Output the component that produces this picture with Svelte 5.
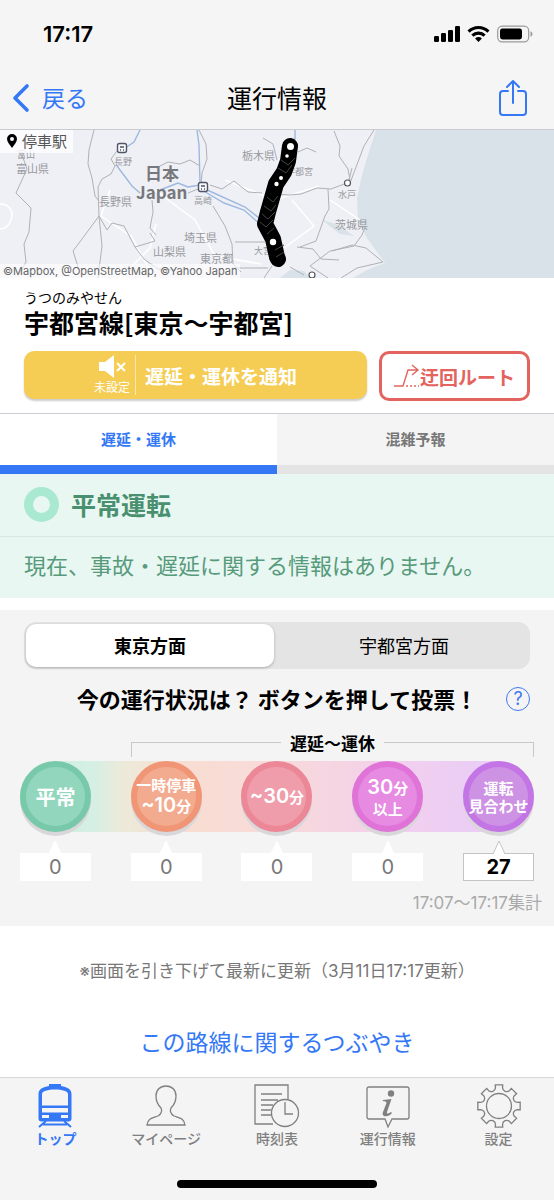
<script>
  let tab = $state('delay');
  let direction = $state('tokyo');

  const levels = [
    { id: 'normal', rows: [['平常', 'lg']], count: 0 },
    { id: 'stop', rows: [['一時停車', 'sm'], ['~10', 'num', '分']], count: 0 },
    { id: 'under30', rows: [['~30', 'num', '分']], count: 0 },
    { id: 'over30', rows: [['30', 'num', '分'], ['以上', 'sm']], count: 0 },
    { id: 'suspend', rows: [['運転', 'sm'], ['見合わせ', 'sm']], count: 27 },
  ];

  const nav = [
    { id: 'top', label: 'トップ' },
    { id: 'mypage', label: 'マイページ' },
    { id: 'timetable', label: '時刻表' },
    { id: 'info', label: '運行情報' },
    { id: 'settings', label: '設定' },
  ];

  function polar(r, deg) {
    const t = (deg * Math.PI) / 180;
    return `${(23 + r * Math.cos(t)).toFixed(2)} ${(23 + r * Math.sin(t)).toFixed(2)}`;
  }

  // eight teeth with a scallop between each pair
  let gear = '';
  for (let i = 0; i < 8; i++) {
    const a = i * 45;
    gear += `${i ? 'L' : 'M'}${polar(18.5, a - 11)}L${polar(21.5, a - 10)}L${polar(21.5, a + 10)}L${polar(18.5, a + 11)}`;
    gear += `A4.2 4.2 0 0 0 ${polar(18.5, a + 34)}`;
  }
  gear += 'Z';
</script>

<div class="app">
  <header>
    <div class="status">
      <span class="time">17:17</span>
      <svg width="100" height="20" viewBox="0 0 100 20" aria-hidden="true">
        <rect x="0" y="12" width="5" height="6" rx="1.3" />
        <rect x="7" y="9" width="5" height="9" rx="1.3" />
        <rect x="14" y="6" width="5" height="12" rx="1.3" />
        <rect x="21" y="2" width="5" height="16" rx="1.3" />
        <g fill="none" stroke="#000" stroke-width="3.2">
          <path d="M34.600 7.600a14 14 0 0 1 19.800 0" />
          <path d="M38.400 11.600a8.600 8.600 0 0 1 12.200 0" />
        </g>
        <path d="M44.500 18l-3.400-3.600a4.800 4.800 0 0 1 6.800 0z" />
        <rect x="63.700" y="2.200" width="31" height="15.600" rx="4.600" fill="none" stroke="#999" stroke-width="1.2" />
        <rect x="66" y="4.500" width="22" height="11" rx="2.400" />
        <path d="M96.500 7.200c2.600 1.200 2.600 4.400 0 5.600z" fill="#999" />
      </svg>
    </div>
    <div class="bar">
      <button class="back">
        <svg width="18" height="30" viewBox="0 0 18 30" fill="none" stroke="currentColor" stroke-width="3.6" stroke-linecap="round" stroke-linejoin="round" aria-hidden="true">
          <path d="M15 3L3 15l12 12" />
        </svg>
        <span>戻る</span>
      </button>
      <h1>運行情報</h1>
      <button class="share" aria-label="共有">
        <svg width="30" height="38" viewBox="0 0 30 38" fill="none" stroke="currentColor" stroke-width="2" stroke-linecap="round" stroke-linejoin="round" aria-hidden="true">
          <path d="M10 12H5a3 3 0 0 0-3 3v18a3 3 0 0 0 3 3h20a3 3 0 0 0 3-3V15a3 3 0 0 0-3-3h-5M15 24V2M9 8l6-6 6 6" />
        </svg>
      </button>
    </div>
  </header>

  <div class="map">
    <svg viewBox="0 0 554 148" preserveAspectRatio="xMidYMid slice" role="img" aria-label="路線図">
      <rect width="554" height="148" fill="#eff0f5" />
      <path d="M376 0l-9 28-5 17-5 23 1 23 9 17 18 25-18 7-14 8H554V0z" fill="#d9e1e9" />
      <path d="M280 148l10-8 14 1 6 7zM322 90l14 4 18 12-14-2z" fill="#d9e1e9" />
      <g fill="none" stroke="#fff" stroke-width="1.5">
        <path d="M0 74c10 0 14 8 11 16-2 6-6 9-11 9M110 60l-9 26 30 20 22 40M155 60l40 30 20 36 46 8M225 50l50 20 44-14M292 70l22 26-30 22M330 70l30 20M120 148l30-30 6-24" />
      </g>
      <g fill="none" stroke="#afb1b7" stroke-width="1">
        <path d="M22 25l5 14-11 24 15 15-2 24-5 12 2 18-8 14" />
        <path d="M94 0l-5 20-1 14 4 14 3 18 4 5M99 86l-1-29 4-8 9-5 4-8-4-7 6-8M99 86l-14 19-12 16 6 19" />
        <path d="M99 86l8 14 5-7 12 3 11 21 20-6-5-8M99 86l3 30-4 32M135 117l9 12 14 10 18 1M152 70l1 12-3 16 6 7" />
        <path d="M156 38l12-6 12 2 10-4 10 6M199 0l7 14 1 15-5 14-1 12M203 57l-15 6" />
        <path d="M210 55l12 4 12-8 14 11 14 1M275 64l14 1 12-1 16-6 14 1 16-6M213 76l12 20 7 18 1 20 8 8" />
        <path d="M235 112l30 0M300 117l16-6 9-25 4-7-1-20M232 138l36 0M290 137l14 8M297 117l16 2 8 10 18 1" />
        <path d="M328 148l-18-12 20-15 24-5 8-11 3-8M352 38l-3 12M350 50l-2-11-9-13 1-10-6-15M350 53l14-37 10-16" />
        <path d="M341 148l16-10 26-6-17-14-14-3-20 6M263 8l10 6 4 16M298 22l9-4 9 4M264 148l8-12" />
      </g>
      <g fill="none" stroke="#9db8df" stroke-width="1.4">
        <path d="M140 0l-6 12-12 8M117 36l15 20 8 7M160 60l18-7 10 4 12-2M197 0l2 15 1 38M202 60l22 13 20 7 18 16M205 59l40 18 18 14M295 0v10" />
      </g>
      <g fill="#fff" stroke="#55565b" stroke-width="1.2">
        <circle cx="347.500" cy="53" r="3" />
        <circle cx="312" cy="145" r="3" />
      </g>
      {#each [[122, 18], [203, 57]] as [x, y]}
        <g transform="translate({x} {y})" stroke="#4f5566" stroke-width="1.4">
          <rect x="-4.500" y="-4.500" width="9" height="9" rx="2" fill="#f7f7fa" />
          <path d="M-2 -1h4M-2 2h1M1 2h1" />
        </g>
      {/each}
      <g class="places" font-size="11">
        <text x="17" y="28" font-size="9">富山</text>
        <text x="16" y="43">富山県</text>
        <text x="114" y="35" font-size="9">長野</text>
        <text x="99" y="76">長野県</text>
        <text x="194" y="74" font-size="9">高崎</text>
        <text x="184" y="112">埼玉県</text>
        <text x="153" y="126">山梨県</text>
        <text x="200" y="133">東京都</text>
        <text x="242" y="30">栃木県</text>
        <text x="286" y="45" font-size="9">宇都宮</text>
        <text x="338" y="68" font-size="9">水戸</text>
        <text x="335" y="99">茨城県</text>
        <text x="254" y="124" font-size="9">大宮</text>
      </g>
      <g class="country">
        <text x="145" y="50">日本</text>
        <text x="136" y="69">Japan</text>
      </g>
      <path d="M290 16l-2 15-4 11-8 12-4 14-4 14-3 12 8 15 4 18 1 2" fill="none" stroke="#000" stroke-width="16" stroke-linecap="round" stroke-linejoin="round" />
      <path d="M281 30l7 5 7-7M278 38l8 5 6-8M267 67l6 5 5-6M264 76l7 5 5-6M262 84l6 5 7-7M260 92l6 5 7-7M267 104l7-6M275 120l9-5M276 127l8-5" fill="none" stroke="#444" stroke-width="1" />
      <g fill="#fff">
        <circle cx="290.500" cy="16.500" r="3.500" />
        <circle cx="287" cy="26" r="1.800" />
        <circle cx="281" cy="48" r="2" />
        <circle cx="276.500" cy="54" r="2.200" />
        <circle cx="273" cy="112" r="3.200" />
      </g>
    </svg>
    <span class="stops">
      <svg width="10" height="14" viewBox="0 0 10 14" aria-hidden="true">
        <path d="M5 0a5 5 0 0 1 5 5c0 3-3 6-5 9C3 11 0 8 0 5a5 5 0 0 1 5-5zm0 3a2 2 0 1 0 0 4 2 2 0 0 0 0-4z" fill-rule="evenodd" />
      </svg>
      停車駅
    </span>
    <span class="credit">©Mapbox, @OpenStreetMap, ©Yahoo Japan</span>
  </div>

  <main>
    <section class="line">
      <p class="kana">うつのみやせん</p>
      <h2>宇都宮線[東京〜宇都宮]</h2>
      <div class="actions">
        <button class="notify">
          <span class="mute">
            <svg width="28" height="24" viewBox="0 0 28 24" aria-hidden="true">
              <path d="M1 7h6l9-7v23l-9-7H1z" fill="#fff" />
              <path d="M19 8l8 8M27 8l-8 8" stroke="#fff" stroke-width="2" />
            </svg>
            未設定
          </span>
          <span class="notify-text">遅延・運休を通知</span>
        </button>
        <button class="detour">
          <svg width="26" height="24" viewBox="0 0 26 24" fill="none" stroke="currentColor" stroke-width="1.4" aria-hidden="true">
            <path d="M0 22h9l5-16h10M18 1l6 5-6 5" />
            <path d="M12 22h13" stroke-dasharray="2 2" />
          </svg>
          迂回ルート
        </button>
      </div>
    </section>

    <div class="tabs">
      <button class:active={tab === 'delay'} onclick={() => (tab = 'delay')}>遅延・運休</button>
      <button class:active={tab === 'crowd'} onclick={() => (tab = 'crowd')}>混雑予報</button>
    </div>

    <section class="service">
      <h3><i class="ring"></i>平常運転</h3>
      <p>現在、事故・遅延に関する情報はありません。</p>
    </section>

    <section class="vote">
      <div class="segment">
        <button class:active={direction === 'tokyo'} onclick={() => (direction = 'tokyo')}>東京方面</button>
        <button class:active={direction === 'utsunomiya'} onclick={() => (direction = 'utsunomiya')}>宇都宮方面</button>
      </div>

      <div class="question">
        <h3>今の運行状況は？ ボタンを押して投票！</h3>
        <button class="help" aria-label="ヘルプ">?</button>
      </div>

      <div class="range"><span>遅延〜運休</span></div>

      <div class="levels">
        {#each levels as level}
          <button class="level {level.id}">
            {#each level.rows as [text, size, unit]}
              <span class={size}>{text}{#if unit}<small>{unit}</small>{/if}</span>
            {/each}
          </button>
        {/each}
      </div>

      <div class="counts">
        {#each levels as level}
          <div class="count" class:voted={level.count > 0}>
            <svg width="14" height="14" viewBox="0 0 14 14" aria-hidden="true">
              <path d="M1 14L7 1l6 13" />
            </svg>
            {level.count}
          </div>
        {/each}
      </div>
      <p class="period">17:07〜17:17集計</p>
    </section>

    <p class="updated">※画面を引き下げて最新に更新（3月11日17:17更新）</p>
    <a class="tweets" href="#tweets">この路線に関するつぶやき</a>
  </main>

  <nav>
    {#each nav as item}
      <a href="#{item.id}" class:current={item.id === 'top'}>
        <svg width="46" height="46" viewBox="0 0 46 46" fill="none" stroke="currentColor" stroke-width="1.3" aria-hidden="true">
          {#if item.id === 'top'}
            <path d="M17 1h12v2c6 1 10.500 3 10.500 8v24.500q0 3-3 3h-27q-3 0-3-3V11c0-5 4.500-7 10.500-8z" fill="currentColor" stroke="none" />
            <path d="M10 11c0-3 6-4.500 13-4.500S36 8 36 11v11.500H10zM10 25h26v4.500H10z" fill="#f4f4f4" stroke="none" />
            <path d="M10 32h7v3h-7zM29 32h7v3h-7z" fill="#f4f4f4" stroke="none" />
            <path d="M14 38l-7 6M32 38l7 6M11 41.500h24" stroke-width="2" />
          {:else if item.id === 'mypage'}
            <path d="M23 3c-6 0-10 4-10 10 0 5 2 9 5 12 2 4 0 6-3 8-6 2-10 2-11 9h38c-1-7-5-7-11-9-3-2-5-4-3-8 3-3 5-7 5-12 0-6-4-10-10-10z" />
          {:else if item.id === 'timetable'}
            <path d="M19 41H1V2h33v14M7 11h21M7 17h17M7 22h12M7 27h10M7 32h10" />
            <circle cx="31" cy="30" r="13.500" />
            <path d="M31 19v12h8" />
          {:else if item.id === 'info'}
            <path d="M4 4h38q2 0 2 2v28q0 2-2 2H27l-4 8-3-8H4q-2 0-2-2V6q0-2 2-2z" />
            <circle cx="26" cy="10.500" r="3.200" fill="currentColor" stroke="none" />
            <path d="M18 17l8.500-1-4.500 13q-1 3 4 0l1 1c-4 5-11 4-9-1l3.500-9q0-2-4-2z" fill="currentColor" stroke="none" />
          {:else}
            <path d={gear} />
            <circle cx="23" cy="23" r="12.500" />
          {/if}
        </svg>
        {item.label}
      </a>
    {/each}
  </nav>
  <div class="home"></div>
</div>

<style>
  :global(body) {
    margin: 0;
    background: #fff;
    font-family: 'Noto Sans CJK JP', sans-serif;
    color: #000;
  }

  * {
    box-sizing: border-box;
  }

  h1, h2, h3, p {
    margin: 0;
  }

  button {
    font: inherit;
    color: inherit;
    border: 0;
    padding: 0;
    background: none;
    cursor: pointer;
  }

  a {
    text-decoration: none;
  }

  svg {
    display: block;
  }

  .app {
    display: flex;
    flex-direction: column;
    min-height: 100vh;
  }

  main {
    flex: 1;
  }

  header {
    background: #f5f5f5;
    border-bottom: 1px solid #c9cbd0;
  }

  .status {
    display: flex;
    justify-content: space-between;
    align-items: center;
    height: 66px;
    padding: 2px 20px 0 43px;
  }

  .time {
    font: 600 22px Inter, sans-serif;
  }

  .bar {
    display: grid;
    grid-template-columns: 1fr auto 1fr;
    align-items: center;
    height: 63px;
    padding: 0 26px 0 12px;
  }

  .bar h1,
  .back span {
    padding-bottom: 2px;
  }

  .bar h1 {
    margin-left: 14px;
    font-size: 25px;
    font-weight: 400;
  }

  .back {
    display: flex;
    align-items: center;
    gap: 12px;
    font-size: 23px;
    color: #3478f6;
  }

  .share {
    justify-self: end;
    color: #3478f6;
  }

  .map {
    position: relative;
    height: 148px;
    overflow: hidden;
  }

  .map > svg {
    width: 100%;
    height: 100%;
  }

  .places {
    fill: #98999e;
  }

  .country {
    fill: #77787c;
    font-size: 17px;
    font-weight: 700;
  }

  .stops {
    position: absolute;
    top: 0;
    left: 0;
    display: flex;
    align-items: center;
    gap: 5px;
    height: 23px;
    padding: 0 6px 2px 7px;
    background: rgba(255, 255, 255, 0.75);
    font-size: 15px;
    color: #555;
  }

  .stops svg {
    fill: #000;
  }

  .credit {
    position: absolute;
    left: 0;
    bottom: 0;
    padding: 0 3px;
    background: rgba(255, 255, 255, 0.6);
    font: 11px/14px Inter, sans-serif;
    color: #666;
  }

  .line {
    padding: 10px 24px 12px;
  }

  .kana {
    font-size: 14px;
    line-height: 18px;
  }

  .line h2 {
    font-size: 25px;
    font-weight: 700;
    line-height: 32px;
  }

  .actions {
    display: flex;
    gap: 12px;
    margin-top: 13px;
  }

  .notify {
    display: flex;
    flex: 1;
    align-items: center;
    justify-content: center;
    height: 48px;
    padding: 4px 0;
    border-radius: 10px;
    background: #f5cd55;
    box-shadow: 0 2px 2px rgba(0, 0, 0, 0.2);
    color: #fff;
  }

  .mute {
    display: flex;
    flex-direction: column;
    align-items: center;
    padding-right: 5px;
    border-right: 1px solid #fbe7ad;
    font-size: 12px;
    line-height: 16px;
  }

  .notify-text {
    padding-left: 9px;
    font-size: 19px;
    font-weight: 700;
  }

  .detour {
    display: flex;
    align-items: center;
    justify-content: center;
    width: 151px;
    height: 50px;
    border: 3px solid #e3645f;
    border-radius: 10px;
    font-size: 19px;
    font-weight: 700;
    color: #e3645f;
  }

  .tabs {
    display: grid;
    grid-template-columns: 1fr 1fr;
    border-top: 1px solid #cccdd2;
  }

  .tabs button {
    height: 60px;
    padding-bottom: 2px;
    border-bottom: 9px solid #e4e4e4;
    background: #f4f4f4;
    font-size: 15px;
    font-weight: 700;
    color: #777;
  }

  .tabs .active {
    border-color: #3478f6;
    background: #fff;
    color: #3478f6;
  }

  .service {
    background: #e8f7f1;
  }

  .service h3 {
    display: flex;
    align-items: center;
    gap: 12px;
    height: 63px;
    padding: 0 24px 2px;
    border-bottom: 1px solid #d7e7e1;
    font-size: 25px;
    font-weight: 700;
    color: #48906f;
  }

  .ring {
    width: 35px;
    height: 35px;
    border: 9px solid #a9e8d1;
    border-radius: 50%;
  }

  .service p {
    padding: 11px 24px 18px;
    font-size: 22px;
    line-height: 32px;
    color: #579a7c;
  }

  .vote {
    margin-top: 12px;
    padding: 12px 0 11px;
    background: #f4f4f4;
  }

  .segment {
    display: grid;
    grid-template-columns: 1fr 1fr;
    gap: 6px;
    height: 47px;
    margin: 0 24px;
    padding: 2px;
    border-radius: 12px;
    background: #e4e4e4;
  }

  .segment button {
    padding-bottom: 2px;
    border-radius: 10px;
    font-size: 18px;
  }

  .segment .active {
    background: #fff;
    box-shadow: 0 1px 3px rgba(0, 0, 0, 0.25);
    font-weight: 700;
  }

  .question {
    display: grid;
    grid-template-columns: 24px 1fr 24px;
    align-items: center;
    height: 60px;
    padding: 0 24px;
  }

  .question h3 {
    grid-column: 2;
    padding-bottom: 2px;
    font-size: 22px;
    font-weight: 700;
    text-align: center;
    white-space: nowrap;
  }

  .help {
    width: 24px;
    height: 24px;
    border: 1px solid #3f78f0;
    border-radius: 50%;
    font: 18px/22px Inter, sans-serif;
    color: #3f78f0;
  }

  .range {
    display: flex;
    align-items: center;
    height: 28px;
    margin: 0 20px 0 131px;
  }

  .range span {
    padding: 0 9px;
    font-size: 17px;
    font-weight: 700;
    line-height: 24px;
  }

  .range::before,
  .range::after {
    content: '';
    flex: 1;
    align-self: flex-end;
    height: 14px;
    border-top: 1px solid #c8c8c8;
    border-left: 1px solid #c8c8c8;
  }

  .range::after {
    border-left: 0;
    border-right: 1px solid #c8c8c8;
  }

  .levels,
  .counts {
    display: grid;
    grid-template-columns: repeat(5, 1fr);
    justify-items: center;
  }

  .levels {
    margin-top: 4px;
    background: linear-gradient(90deg, #cdf0e1, #d6efe4 9%, #ecead9 15%, #f8ddd2 30%, #f8dbd9 48%, #f5d4e3 65%, #f1cff0 80%, #e8cdf6) center / 80% 100% no-repeat;
  }

  .level {
    display: flex;
    flex-direction: column;
    align-items: center;
    justify-content: center;
    width: 71px;
    height: 71px;
    border: 6px solid;
    border-radius: 50%;
    box-shadow: 0 4px 0 #d9d7da;
    font-weight: 700;
    line-height: 22px;
    white-space: nowrap;
  }

  .level span {
    color: #fff;
  }

  .lg {
    font-size: 20px;
  }

  .sm {
    font-size: 15px;
    line-height: 18px;
  }

  .num {
    font-family: Inter, 'Noto Sans CJK JP', sans-serif;
    font-size: 20px;
    font-weight: 600;
  }

  .num small {
    font-size: 15px;
    font-weight: 700;
  }

  .normal {
    border-color: #78c9aa;
    background: #92d7bd;
  }

  .stop {
    border-color: #f09575;
    background: #f3ab90;
  }

  .under30 {
    border-color: #ec8797;
    background: #f09dab;
  }

  .over30 {
    border-color: #df73d7;
    background: #e68ae2;
  }

  .suspend {
    border-color: #c475e5;
    background: #cd92e4;
  }

  .counts {
    margin-top: 21px;
  }

  .count {
    position: relative;
    width: 71px;
    height: 28px;
    border: 1px solid #fff;
    background: #fff;
    font: 20px/26px Inter, sans-serif;
    text-align: center;
    color: #777;
  }

  .count svg {
    position: absolute;
    top: -14px;
    left: 50%;
    margin-left: -7px;
    fill: #fff;
    stroke: #fff;
  }

  .voted {
    border-color: #c4c4c4;
    font-weight: 700;
    color: #000;
  }

  .voted svg {
    stroke: #c4c4c4;
  }

  .period {
    margin-top: 10px;
    padding-right: 12px;
    font-family: Inter, 'Noto Sans CJK JP', sans-serif;
    font-size: 17px;
    line-height: 24px;
    text-align: right;
    color: #aaa;
  }

  .updated {
    margin-top: 33px;
    font-family: Inter, 'Noto Sans CJK JP', sans-serif;
    font-size: 17px;
    line-height: 24px;
    text-align: center;
    color: #777;
  }

  .tweets {
    display: block;
    margin: 41px 0 18px;
    font-size: 23px;
    line-height: 34px;
    text-align: center;
    color: #3478f6;
  }

  nav {
    display: grid;
    grid-template-columns: repeat(5, 1fr);
    height: 103px;
    padding-top: 5px;
    border-top: 1px solid #d8d8d8;
    background: #f4f4f4;
  }

  nav a {
    display: flex;
    flex-direction: column;
    align-items: center;
    font-size: 14px;
    font-weight: 500;
    line-height: 18px;
    color: #808080;
  }

  nav .current {
    font-weight: 700;
    color: #3478f6;
  }

  .home {
    height: 20px;
    background: #f4f4f4;
  }

  .home::before {
    content: '';
    display: block;
    width: 36%;
    height: 8px;
    margin: 0 auto;
    border-radius: 4px;
    background: #000;
  }
</style>
